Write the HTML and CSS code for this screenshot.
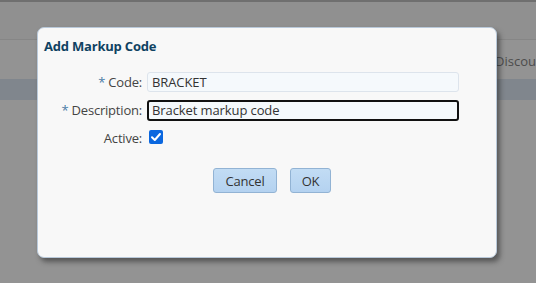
FILE: index.html
```html
<!DOCTYPE html>
<html>
<head>
<meta charset="utf-8">
<link rel="stylesheet" href="styles.css">
</head>
<body>
<div class="page">
  <div class="topline"></div>
  <div class="toolbar"></div>
  <div class="tabs"><span class="tab-text">Discount</span></div>
  <div class="gridhead"></div>
  <div class="rest"></div>
</div>

<div class="dialog">
  <div class="title">Add Markup Code</div>
  <div class="form">
    <label class="lbl"><span class="req">*</span> Code:</label>
    <div class="field"><input class="inp" type="text" value="BRACKET"></div>
    <label class="lbl"><span class="req">*</span> Description:</label>
    <div class="field"><input class="inp focus" type="text" value="Bracket markup code"></div>
    <label class="lbl">Active:</label>
    <div class="field"><span class="chk"><svg width="14" height="14" viewBox="0 0 14 14"><path d="M3 7.2 L5.8 10 L11 4" fill="none" stroke="#fff" stroke-width="2" stroke-linecap="round" stroke-linejoin="round"/></svg></span></div>
  </div>
  <div class="buttons">
    <button class="btn cancel">Cancel</button>
    <button class="btn ok">OK</button>
  </div>
</div>
</body>
</html>
```
FILE: styles.css
```css
html, body {
  margin: 0;
  padding: 0;
}
body {
  background: #939393;
  font-family: "Open Sans", "Noto Sans", sans-serif;
  width: 536px;
  height: 283px;
  overflow: hidden;
  position: relative;
}
.page {
  display: flex;
  flex-direction: column;
}
.topline {
  height: 2px;
  background: #6f6f6f;
}
.toolbar {
  height: 38px;
  background: #909090;
  border-bottom: 1px solid #868686;
  box-sizing: border-box;
}
.tabs {
  height: 39px;
  background: #939393;
  position: relative;
  overflow: hidden;
}
.tab-text {
  position: absolute;
  left: 495px;
  top: 12px;
  font-size: 13px;
  color: #4c4c4c;
  white-space: nowrap;
}
.gridhead {
  height: 21px;
  background: #80868d;
}
.rest {
  height: 183px;
  background: #939393;
}

.dialog {
  position: absolute;
  left: 37px;
  top: 27px;
  width: 460px;
  height: 231px;
  box-sizing: border-box;
  background: #f8f8f8;
  border: 1px solid #b9c9da;
  border-radius: 7px;
  box-shadow: 3px 4px 5px rgba(40, 40, 40, 0.55);
  padding: 8px 0 0 6px;
}
.title {
  font-family: "Open Sans", sans-serif;
  font-weight: bold;
  font-size: 13px;
  color: #0f4262;
  letter-spacing: -0.2px;
  height: 20px;
  line-height: 20px;
}
.form {
  display: grid;
  grid-template-columns: 98px 312px;
  column-gap: 5px;
  row-gap: 8px;
  margin-top: 16px;
  align-items: center;
}
.lbl {
  text-align: right;
  font-size: 13px;
  color: #444;
  line-height: 20px;
  letter-spacing: -0.2px;
}
.req {
  color: #4a7ca6;
}
.field {
  height: 20px;
  display: flex;
  align-items: center;
}
.inp {
  width: 312px;
  height: 20px;
  box-sizing: border-box;
  border: 1px solid #dde4ec;
  border-radius: 3px;
  background: #f5f9fc;
  font-family: "Open Sans", sans-serif;
  font-size: 13px;
  color: #333;
  padding: 0 4px;
  margin: 0;
  outline: none;
  letter-spacing: -0.1px;
}
.inp.focus {
  height: 21px;
  border: 2px solid #111;
  border-radius: 3px;
  padding: 0 3px;
  background: #f5f9fc;
}
.chk {
  margin-left: 2px;
  margin-top: -2px;
  width: 14px;
  height: 14px;
  border-radius: 2px;
  background: #0b67df;
  display: flex;
}
.buttons {
  display: flex;
  justify-content: center;
  gap: 13px;
  margin-top: 20px;
  padding-left: 4px;
}
.btn {
  height: 25px;
  box-sizing: border-box;
  border: 1px solid #92b3d4;
  border-radius: 3px;
  background: linear-gradient(#c2dcf4, #b4d2f0);
  font-family: "Open Sans", sans-serif;
  font-size: 13px;
  color: #333;
  padding: 0;
  letter-spacing: -0.2px;
}
.cancel {
  width: 64px;
}
.ok {
  width: 41px;
}
```
